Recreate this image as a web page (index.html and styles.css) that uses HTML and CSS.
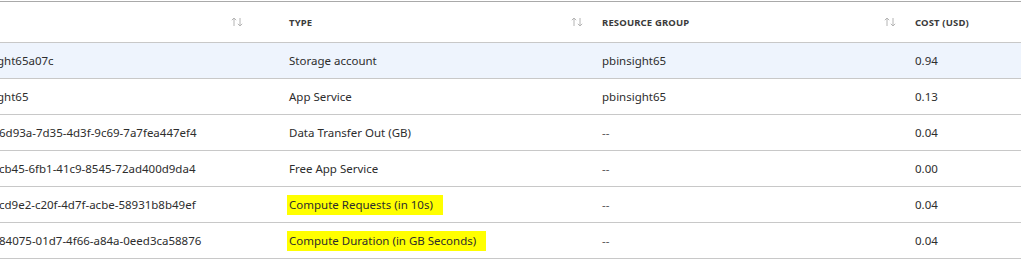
FILE: index.html
```html
<!DOCTYPE html>
<html lang="en">
<head>
  <meta charset="UTF-8">
  <meta name="viewport" content="width=device-width, initial-scale=1.0">
  <title>Cost by resource</title>
  <link rel="stylesheet" href="styles.css">
</head>
<body>
  <div class="grid-wrap">
    <table class="cost-grid">
      <colgroup>
        <col class="c-name">
        <col class="c-type">
        <col class="c-group">
        <col class="c-cost">
      </colgroup>
      <thead>
        <tr>
          <th class="name-h">
            <div class="th-in"><span></span>
              <svg class="sort" width="12" height="10" viewBox="0 0 12 10"><path d="M3 9V1M0.8 3.2L3 1l2.2 2.2M9 1v8M6.8 6.8L9 9l2.2-2.2" fill="none" stroke="currentColor" stroke-width="1"/></svg>
            </div>
          </th>
          <th>
            <div class="th-in"><span>Type</span>
              <svg class="sort" width="12" height="10" viewBox="0 0 12 10"><path d="M3 9V1M0.8 3.2L3 1l2.2 2.2M9 1v8M6.8 6.8L9 9l2.2-2.2" fill="none" stroke="currentColor" stroke-width="1"/></svg>
            </div>
          </th>
          <th>
            <div class="th-in"><span>Resource group</span>
              <svg class="sort" width="12" height="10" viewBox="0 0 12 10"><path d="M3 9V1M0.8 3.2L3 1l2.2 2.2M9 1v8M6.8 6.8L9 9l2.2-2.2" fill="none" stroke="currentColor" stroke-width="1"/></svg>
            </div>
          </th>
          <th><div class="th-in"><span>Cost (USD)</span></div></th>
        </tr>
      </thead>
      <tbody>
        <tr class="selected">
          <td class="name"><span class="cut">ght65a07c</span></td>
          <td>Storage account</td>
          <td>pbinsight65</td>
          <td>0.94</td>
        </tr>
        <tr>
          <td class="name"><span class="cut">ght65</span></td>
          <td>App Service</td>
          <td>pbinsight65</td>
          <td>0.13</td>
        </tr>
        <tr>
          <td class="name"><span>6d93a-7d35-4d3f-9c69-7a7fea447ef4</span></td>
          <td>Data Transfer Out (GB)</td>
          <td class="empty">--</td>
          <td>0.04</td>
        </tr>
        <tr>
          <td class="name"><span>cb45-6fb1-41c9-8545-72ad400d9da4</span></td>
          <td>Free App Service</td>
          <td class="empty">--</td>
          <td>0.00</td>
        </tr>
        <tr>
          <td class="name"><span>cd9e2-c20f-4d7f-acbe-58931b8b49ef</span></td>
          <td><span class="marker">Compute Requests (in 10s)</span></td>
          <td class="empty">--</td>
          <td>0.04</td>
        </tr>
        <tr>
          <td class="name"><span>84075-01d7-4f66-a84a-0eed3ca58876</span></td>
          <td><span class="marker">Compute Duration (in GB Seconds)</span></td>
          <td class="empty">--</td>
          <td>0.04</td>
        </tr>
      </tbody>
    </table>
  </div>
</body>
</html>
```

FILE: styles.css
```css
body {
  margin:0; padding:0;
  background:#fff; color:#2d2d2d;
  font-family: "Noto Sans", "Open Sans", Arial, sans-serif;
}
.grid-wrap {
  width:1021px; overflow:hidden;
  padding-top:1px;
}
.cost-grid {
  width:1021px;
  table-layout:fixed;
  border-collapse:collapse;
  border-top:1px solid #a9a9a9;
}
.c-name { width:277px; }
.c-type { width:313px; }
.c-group { width:313px; }
.c-cost { width:118px; }

.cost-grid th {
  height:40px; padding:0 0 0 12px;
  border-bottom:1px solid #c8c8c8;
  text-align:left;
  font-size:9.5px; font-weight:700;
  text-transform:uppercase; letter-spacing:0.15px;
  color:#3b3b3b;
}
.th-in { display:flex; align-items:center; padding-right:7px; }
.th-in span { flex:1; }
.name-h .th-in { padding-right:34px; }
.sort { color:#b4b4b4; flex:none; }

.cost-grid td {
  height:35px; padding:0 0 0 12px;
  border-bottom:1px solid #c8c8c8;
  font-size:11.5px; color:#2d2d2d;
  white-space:nowrap; overflow:hidden;
}
.cost-grid td.name { padding-left:0; }
.cost-grid td.name span { display:inline-block; margin-left:-1px; }
.cost-grid td.name span.cut { margin-left:-3px; }
.cost-grid td.empty { color:#555; }
.selected td { background:#eef4fd; }

.marker {
  background:#ffff00;
  padding:2px 10px 3px 2px;
  margin-left:-2px;
}
```
